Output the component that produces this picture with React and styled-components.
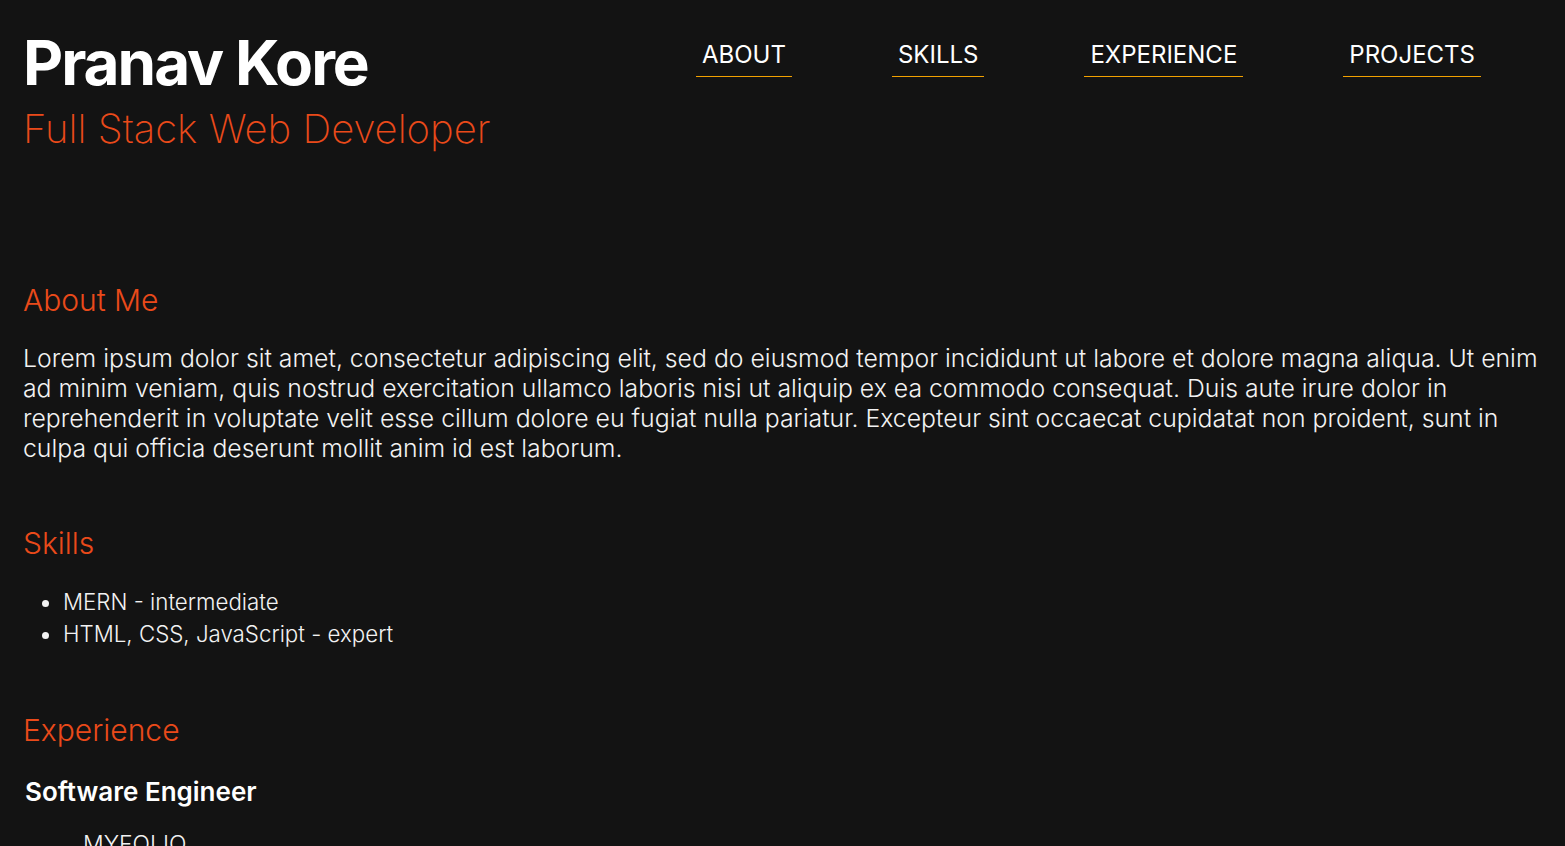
import React from "react";
import styled, { createGlobalStyle } from "styled-components";

const navLinks = ["ABOUT", "SKILLS", "EXPERIENCE", "PROJECTS"];

const skills = ["MERN - intermediate", "HTML, CSS, JavaScript - expert"];

function App() {
  return (
    <>
      <GlobalStyle />
      <Page>
        <Header>
          <Brand>
            <Name>Pranav Kore</Name>
            <Role>Full Stack Web Developer</Role>
          </Brand>
          <Nav>
            {navLinks.map((link) => (
              <NavLink key={link} href={`#${link.toLowerCase()}`}>
                {link}
              </NavLink>
            ))}
          </Nav>
        </Header>

        <Main>
          <Section id="about">
            <SectionTitle>About Me</SectionTitle>
            <Paragraph>
              Lorem ipsum dolor sit amet, consectetur adipiscing elit, sed do
              eiusmod tempor incididunt ut labore et dolore magna aliqua. Ut
              enim ad minim veniam, quis nostrud exercitation ullamco laboris
              nisi ut aliquip ex ea commodo consequat. Duis aute irure dolor in
              reprehenderit in voluptate velit esse cillum dolore eu fugiat
              nulla pariatur. Excepteur sint occaecat cupidatat non proident,
              sunt in culpa qui officia deserunt mollit anim id est laborum.
            </Paragraph>
          </Section>

          <Section id="skills">
            <SectionTitle>Skills</SectionTitle>
            <SkillList>
              {skills.map((skill) => (
                <li key={skill}>{skill}</li>
              ))}
            </SkillList>
          </Section>

          <Section id="experience">
            <SectionTitle>Experience</SectionTitle>
            <JobTitle>Software Engineer</JobTitle>
            <CompanyList>
              <li>MYFOLIO</li>
            </CompanyList>
          </Section>
        </Main>
      </Page>
    </>
  );
}

const GlobalStyle = createGlobalStyle`
  body {
    margin: 0;
    background-color: #131313;
    color: #f2f2f2;
    font-family: Inter, "Noto Sans", sans-serif;
  }
`;

const Page = styled.div`
  padding: 0 23px 80px;
`;

const Header = styled.header`
  display: flex;
  justify-content: space-between;
  align-items: flex-start;
  padding-top: 27px;
`;

const Brand = styled.div`
  display: flex;
  flex-direction: column;
`;

const Name = styled.h1`
  margin: 0;
  font-size: 62px;
  line-height: 72px;
  font-weight: 700;
  letter-spacing: -2px;
  color: #ffffff;
`;

const Role = styled.p`
  margin: 6px 0 0;
  font-size: 40px;
  line-height: 48px;
  font-weight: 200;
  color: #ea4a1a;
`;

const Nav = styled.nav`
  display: flex;
  gap: 100px;
  margin: 13px 61px 0 0;
`;

const NavLink = styled.a`
  padding: 0 6px 6px;
  font-size: 24px;
  line-height: 30px;
  font-weight: 400;
  color: #ffffff;
  text-decoration: none;
  border-bottom: 1px solid #f2a100;
`;

const Main = styled.main`
  margin-top: 129px;
  display: flex;
  flex-direction: column;
  gap: 62px;
`;

const Section = styled.section`
  display: flex;
  flex-direction: column;
`;

const SectionTitle = styled.h2`
  margin: 0 0 25px;
  font-size: 30px;
  line-height: 36px;
  font-weight: 300;
  color: #ea4a1a;
`;

const Paragraph = styled.p`
  margin: 0;
  font-size: 24.8px;
  line-height: 30px;
  font-weight: 300;
`;

const SkillList = styled.ul`
  margin: 0;
  padding-left: 40px;
  font-size: 22.3px;
  line-height: 32px;
  font-weight: 300;
`;

const JobTitle = styled.h3`
  margin: 3px 0 0 2px;
  font-size: 26px;
  line-height: 32px;
  font-weight: 600;
  color: #ffffff;
`;

const CompanyList = styled.ul`
  margin: 20px 0 0;
  padding-left: 60px;
  list-style: none;
  font-size: 23px;
  line-height: 32px;
  font-weight: 300;
`;

export default App;
